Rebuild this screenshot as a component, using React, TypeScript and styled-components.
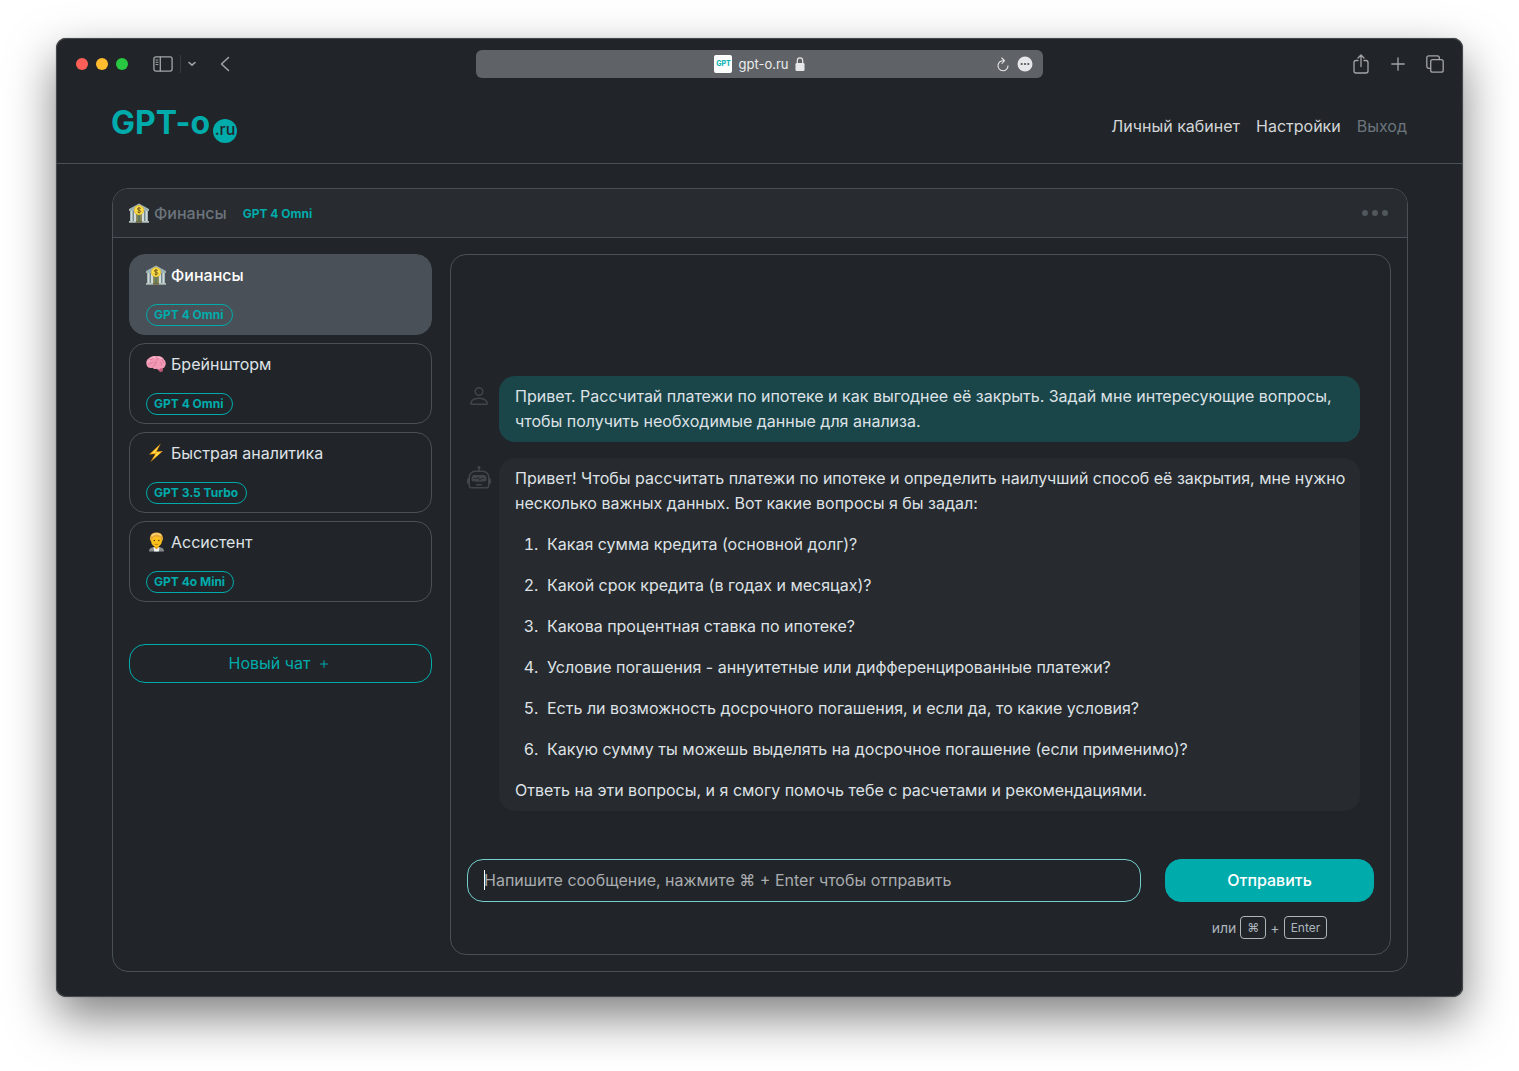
import React from "react";
import styled, { createGlobalStyle, css } from "styled-components";
import { BsPerson, BsPlus, BsRobot, BsThreeDots } from "react-icons/bs";

const teal = "#00abab";
const line = "#495057";
const surface = "#212529";

const GlobalStyle = createGlobalStyle`
  *, *::before, *::after { box-sizing: border-box; }
  body {
    margin: 0;
    background: #fff;
    color: #dee2e6;
    font: 400 16px/25px Inter, "Noto Sans", sans-serif;
  }
  button, input { font: inherit; }
  button { cursor: pointer; }
  p, h1, h2, ol, ul { margin: 0; padding: 0; }
`;

const Desktop = styled.div`
  min-height: 100vh;
  display: flex;
  flex-direction: column;
  padding: 38px 56px 74px;
`;

const BrowserWindow = styled.div`
  flex: 1;
  display: flex;
  flex-direction: column;
  background: ${surface};
  border-radius: 10px;
  box-shadow: inset 0 0 0 1px #46494d, 0 0 1px rgba(0, 0, 0, 0.6), 0 20px 48px rgba(0, 0, 0, 0.5);
`;

const Toolbar = styled.div`
  height: 52px;
  display: grid;
  grid-template-columns: 1fr minmax(0, 567px) 1fr;
  align-items: center;
  padding: 0 18px;
`;

const ToolGroup = styled.div<{ $end?: boolean }>`
  display: flex;
  align-items: center;
  gap: ${(p) => (p.$end ? "17px" : "0")};
  justify-content: ${(p) => (p.$end ? "flex-end" : "flex-start")};
`;

const Lights = styled.div`
  display: flex;
  gap: 8px;
  margin: 0 23px 0 2px;
`;

const Light = styled.span<{ $color: string }>`
  width: 12px;
  height: 12px;
  border-radius: 50%;
  background: ${(p) => p.$color};
`;

const ToolButton = styled.button<{ $width: number }>`
  width: ${(p) => p.$width}px;
  height: 24px;
  display: flex;
  align-items: center;
  justify-content: center;
  padding: 0;
  border: 0;
  background: none;
  color: #a3a5a8;
`;

const ToolDivider = styled.span`
  width: 1px;
  height: 18px;
  margin: 0 2px 0 5px;
  background: #36393d;
`;

const AddressBar = styled.div`
  height: 28px;
  display: grid;
  grid-template-columns: 1fr auto 1fr;
  align-items: center;
  border-radius: 6px;
  background: #5f6266;
  color: #eceded;
  font-size: 13px;
  line-height: 18px;
`;

const Site = styled.div`
  grid-column: 2;
  display: flex;
  align-items: center;
  gap: 6px;
`;

const Favicon = styled.span`
  width: 18px;
  height: 18px;
  border-radius: 2px;
  background: #fff;
  color: #12b5b5;
  font-size: 7px;
  line-height: 18px;
  font-weight: 800;
  text-align: center;
`;

const AddressActions = styled.div`
  display: flex;
  justify-content: flex-end;
  padding-right: 7px;

  button { color: #e6e7e8; }
`;

const SiteHeader = styled.header`
  height: 74px;
  display: flex;
  align-items: center;
  justify-content: space-between;
  padding: 0 56px 0 55px;
  border-bottom: 1px solid ${line};
`;

const Logo = styled.a`
  display: flex;
  align-items: flex-end;
  gap: 3px;
  color: ${teal};
  text-decoration: none;
  font-size: 32px;
  line-height: 40px;
  font-weight: 700;
  padding-bottom: 7px;
`;

const LogoDot = styled.span`
  width: 24px;
  height: 24px;
  border-radius: 50%;
  background: ${teal};
  color: ${surface};
  font-size: 16px;
  line-height: 20px;
  font-weight: 500;
  text-align: center;
`;

const Nav = styled.nav`
  display: flex;
  gap: 16px;
`;

const NavLink = styled.a<{ $muted?: boolean }>`
  color: ${(p) => (p.$muted ? "#6c757d" : "#d3d5d7")};
  text-decoration: none;
`;

const Main = styled.main`
  flex: 1;
  display: flex;
  padding: 24px 55px 25px 56px;
`;

const Card = styled.section`
  flex: 1;
  display: flex;
  flex-direction: column;
  border: 1px solid ${line};
  border-radius: 16px;
  overflow: hidden;
`;

const CardHeader = styled.div`
  display: flex;
  align-items: center;
  gap: 16px;
  padding: 12px 16px 11px;
  border-bottom: 1px solid ${line};
  background: #282b2f;
`;

const ChatTitle = styled.h2<{ $tone?: "muted" | "active" }>`
  display: flex;
  align-items: center;
  gap: 5px;
  font-size: 16px;
  line-height: 25px;
  font-weight: ${(p) => (p.$tone ? 500 : 400)};
  color: ${(p) => (p.$tone === "muted" ? "#6c757d" : p.$tone === "active" ? "#fff" : "#dee2e6")};

  svg { margin-bottom: 2px; }
`;

const ModelName = styled.span`
  color: ${teal};
  font-size: 12px;
  line-height: 20px;
  font-weight: 700;
`;

const MenuButton = styled.button`
  height: 24px;
  display: flex;
  align-items: center;
  margin-left: auto;
  padding: 0 0 2px;
  border: 0;
  background: none;
  color: #50575d;
  font-size: 32px;
`;

const CardBody = styled.div`
  flex: 1;
  display: grid;
  grid-template-columns: 303px minmax(0, 1fr);
  gap: 18px;
  padding: 16px;
`;

const ChatList = styled.ul`
  display: flex;
  flex-direction: column;
  gap: 8px;
  list-style: none;
  margin-bottom: 42px;
`;

const ChatItem = styled.button<{ $active?: boolean }>`
  width: 100%;
  display: flex;
  flex-direction: column;
  align-items: flex-start;
  gap: 16px;
  padding: 8px 16px;
  border: 1px solid ${line};
  border-radius: 16px;
  background: ${(p) => (p.$active ? line : "transparent")};
`;

const Badge = styled(ModelName)`
  padding: 0 8px 0 7px;
  border: 1px solid ${teal};
  border-radius: 11px;
`;

const buttonShape = css`
  display: flex;
  align-items: center;
  justify-content: center;
  width: 100%;
  border: 1px solid ${teal};
  border-radius: 16px;
`;

const NewChatButton = styled.button`
  ${buttonShape}
  gap: 6px;
  padding: 6px 16px;
  background: transparent;
  color: ${teal};
`;

const Conversation = styled.section`
  display: flex;
  flex-direction: column;
  border: 1px solid ${line};
  border-radius: 16px;
  padding: 16px 16px 15px;
`;

const Messages = styled.div`
  flex: 1;
  display: flex;
  flex-direction: column;
  justify-content: flex-end;
  gap: 16px;
  padding: 0 14px 48px 0;
`;

const Message = styled.article`
  display: flex;
  gap: 8px;
`;

const Avatar = styled.div`
  padding-top: 8px;
  color: #41464b;
  font-size: 24px;
  line-height: 0;
`;

const Bubble = styled.div<{ $own?: boolean }>`
  flex: 1;
  display: flex;
  flex-direction: column;
  gap: 16px;
  padding: 8px 12px 8px 16px;
  border-radius: 16px;
  background: ${(p) => (p.$own ? "#1a464a" : "#272a2e")};
`;

const Questions = styled.ol`
  display: flex;
  flex-direction: column;
  gap: 16px;
  padding-left: 32px;

  li::marker { content: counter(list-item) ".\\00a0\\00a0"; }
`;

const Composer = styled.form`
  display: grid;
  grid-template-columns: minmax(0, 1fr) 209px;
  column-gap: 24px;
  row-gap: 14px;
`;

const Field = styled.div`
  position: relative;
`;

const Caret = styled.span`
  position: absolute;
  left: 17px;
  top: 11px;
  width: 1px;
  height: 20px;
  background: #fff;
`;

const MessageInput = styled.input`
  width: 100%;
  height: 43px;
  padding: 0 16px 2px;
  border: 1px solid #75cfcd;
  border-radius: 16px;
  outline: 0;
  background: transparent;
  color: #dee2e6;

  &::placeholder { color: #a9acaf; opacity: 1; }
`;

const SendButton = styled.button`
  ${buttonShape}
  height: 43px;
  background: ${teal};
  color: #fff;
  font-weight: 500;
`;

const Hint = styled.div`
  grid-column: 2;
  display: flex;
  align-items: center;
  justify-content: center;
  gap: 4px;
  color: #adb5bd;
  font-size: 14px;
  line-height: 21px;
`;

const Key = styled.kbd`
  padding: 0 6px;
  border: 1px solid #adb5bd;
  border-radius: 4px;
  font: 400 12px/21px Inter, "Noto Sans", sans-serif;
`;

const BankEmoji = () => (
  <svg width="20" height="20" viewBox="0 0 20 20" aria-hidden="true">
    <path d="M0 6 10 .5 20 6v2H0z" fill="#9db3b5" />
    <path d="M1 8h18v10H1z" fill="#74898c" />
    <path d="M1.500 8h2v10h-2zM5 8h2v10H5zM13 8h2v10h-2zM16.500 8h2v10h-2z" fill="#d3dcdc" />
    <path d="M7.500 11h5v8h-5z" fill="#35656e" />
    <path d="M7.500 12h1v7h-1zM11.500 12h1v7h-1zM9.700 12h.6v7h-.6z" fill="#c9a43a" />
    <path d="M0 18h20v1.700H0z" fill="#b6c3bf" />
    <path d="M7 18h6v1.700H7z" fill="#6f6a43" />
    <circle cx="10" cy="7.200" r="5" fill="#e9bd22" />
    <circle cx="10" cy="7.200" r="4.200" fill="#fbdc49" />
    <path d="M11.800 5.700c-.3-1-3.400-1.200-3.400.3 0 1.600 3.400.8 3.400 2.400 0 1.500-3.300 1.400-3.600.2M10 4v6.500" fill="none" stroke="#6b5317" strokeWidth=".9" />
  </svg>
);

const BrainEmoji = () => (
  <svg width="20" height="20" viewBox="0 0 20 20" aria-hidden="true">
    <path d="M12 13.500c2-.5 5 0 5 1.700S16.300 18 14.800 18s-2.500-1.500-2.800-3z" fill="#c4577b" />
    <path d="M.8 11.500C-.5 8.500.8 5 3.500 3.800 5.500 1.900 9 1.600 11 2.200c3-.5 6 .9 7 3.300 1.800 1.500 2.400 4.500 1 6.800-.7 1.900-2.600 2.400-4.300 2-1 1.600-3.200 1.600-4.200.4-1.500.6-3.200.2-3.800-1-2.200.7-5.200.1-5.900-2.200z" fill="#f29ab5" />
    <path d="M3 6.500c1.300-1 2.500-.5 3.500-1.500M2.500 10.500c1-1.500 2.800-.5 3.800-2M7 12c1-1.200 2.500-.8 3-2.200M10 6.500c.8-1 2-.8 2.500-2M14.500 8.500c1.200.3 1.200 1.700.8 2.800M16 5.500c-.3 1.200 1.200 1.600 1.400 3M8 8.500c.8.400 1.700.2 2.500-.3" fill="none" stroke="#d36a90" strokeWidth=".7" strokeLinecap="round" />
    <path d="M4.800 4c1-.8 2.700-1 4-.8M12.500 3.400c1.500 0 2.500.6 3 1.300M1.800 8c.3-.8 1-1.300 2-1.500" fill="none" stroke="#fccbd9" strokeWidth=".9" strokeLinecap="round" />
  </svg>
);

const BoltEmoji = () => (
  <svg width="20" height="20" viewBox="0 0 20 20" aria-hidden="true">
    <path d="M14.800.5 3 11.500l6.200-.4L4.300 19.300 17 8l-6.300.4z" fill="#f39c12" />
    <path d="M13.200 2.800 5.200 10.400l5.600-.6-3.900 6.400L15 8.900l-6 .5z" fill="#ffe04d" />
  </svg>
);

const WorkerEmoji = () => (
  <svg width="20" height="20" viewBox="0 0 20 20" aria-hidden="true">
    <path d="M3 19.500c0-3.500 2.500-4.500 7.500-4.500s7.500 1 7.500 4.500z" fill="#858a8d" />
    <path d="M7.500 15.200h6l-.8 4.300H8.300z" fill="#f1f3f4" />
    <path d="M8.500 12.500h4v3.300l-2 1.400-2-1.400z" fill="#e89b13" />
    <ellipse cx="10.500" cy="8.500" rx="5.500" ry="6.500" fill="#fcc21b" />
    <path d="M4.100 9C3.200 3 6 .5 10.500.5S17.800 3 16.900 9c-1-.8-1.500-2.300-2-3.700-2.400 0-4.400-.2-5.900-.8-1.500.6-2.700 2.500-4.900 4.500z" fill="#e5a93a" />
    <path d="M6 3.700C8 1.500 12 1.200 14.700 3.200" fill="none" stroke="#ffdb80" strokeWidth="1.400" strokeLinecap="round" />
    <circle cx="8.300" cy="8.500" r=".8" fill="#513a16" />
    <circle cx="12.800" cy="8.500" r=".8" fill="#513a16" />
    <path d="M8.800 12c1 .7 2.400.7 3.400 0" fill="none" stroke="#9c5b18" strokeWidth=".8" />
  </svg>
);

const chats = [
  { title: "Финансы", model: "GPT 4 Omni", Emoji: BankEmoji, active: true },
  { title: "Брейншторм", model: "GPT 4 Omni", Emoji: BrainEmoji },
  { title: "Быстрая аналитика", model: "GPT 3.5 Turbo", Emoji: BoltEmoji },
  { title: "Ассистент", model: "GPT 4o Mini", Emoji: WorkerEmoji },
];

const questions = [
  "Какая сумма кредита (основной долг)?",
  "Какой срок кредита (в годах и месяцах)?",
  "Какова процентная ставка по ипотеке?",
  "Условие погашения - аннуитетные или дифференцированные платежи?",
  "Есть ли возможность досрочного погашения, и если да, то какие условия?",
  "Какую сумму ты можешь выделять на досрочное погашение (если применимо)?",
];

const stroke = { fill: "none", stroke: "currentColor", strokeLinecap: "round", strokeLinejoin: "round" } as const;

function BrowserToolbar() {
  return (
    <Toolbar>
      <ToolGroup>
        <Lights>
          <Light $color="#ff5f57" />
          <Light $color="#febc2e" />
          <Light $color="#28c840" />
        </Lights>
        <ToolButton $width={24} aria-label="Sidebar">
          <svg width="20" height="16" viewBox="0 0 20 16" {...stroke} strokeWidth="1.300">
            <rect x=".9" y=".9" width="18.200" height="14.200" rx="2" />
            <path d="M7.300 1v14" />
            <path d="M3 4h2M3 6.300h2M3 8.600h2" strokeWidth="1" />
          </svg>
        </ToolButton>
        <ToolDivider />
        <ToolButton $width={18} aria-label="Tab groups">
          <svg width="8" height="6" viewBox="0 0 8 6" {...stroke} strokeWidth="1.600">
            <path d="m1 1.500 3 2.700 3-2.700" />
          </svg>
        </ToolButton>
        <ToolButton $width={48} aria-label="Back">
          <svg width="10" height="16" viewBox="0 0 10 16" {...stroke} strokeWidth="1.500">
            <path d="M8.500 1.500 1.500 8l7 6.500" />
          </svg>
        </ToolButton>
      </ToolGroup>
      <AddressBar>
        <Site>
          <Favicon>GPT</Favicon>
          <span>gpt-o.ru</span>
          <svg width="10" height="14" viewBox="0 0 10 14" aria-hidden="true">
            <rect x=".5" y="6" width="9" height="8" rx="1.300" fill="#e6e7e8" />
            <path d="M2.300 6V3.800a2.700 2.900 0 0 1 5.400 0V6" fill="none" stroke="#e6e7e8" strokeWidth="1.200" />
          </svg>
        </Site>
        <AddressActions>
          <ToolButton $width={22} aria-label="Reload">
            <svg width="12" height="15" viewBox="0 0 12 15" {...stroke} strokeWidth="1.100">
              <path d="M6.800 3.800A5 5 0 1 0 11 8.700M4.800 1l2.700 2.700-2.500 2.800" />
            </svg>
          </ToolButton>
          <ToolButton $width={22} aria-label="Page menu">
            <svg width="16" height="16" viewBox="0 0 16 16">
              <circle cx="8" cy="8" r="7.500" fill="currentColor" />
              <g fill="#4d5054">
                <circle cx="4.700" cy="8" r="1.100" />
                <circle cx="8" cy="8" r="1.100" />
                <circle cx="11.300" cy="8" r="1.100" />
              </g>
            </svg>
          </ToolButton>
        </AddressActions>
      </AddressBar>
      <ToolGroup $end>
        <ToolButton $width={20} aria-label="Share">
          <svg width="16" height="20" viewBox="0 0 16 20" {...stroke} strokeWidth="1.300">
            <path d="M5 6.500H3A2 2 0 0 0 1 8.500V17a2 2 0 0 0 2 2h10a2 2 0 0 0 2-2V8.500a2 2 0 0 0-2-2h-2M8 12.500V1.200M5 4l3-3 3 3" />
          </svg>
        </ToolButton>
        <ToolButton $width={20} aria-label="New tab">
          <svg width="14" height="14" viewBox="0 0 14 14" {...stroke} strokeWidth="1.300">
            <path d="M7 .8v12.400M.8 7h12.400" />
          </svg>
        </ToolButton>
        <ToolButton $width={20} aria-label="Tab overview">
          <svg width="18" height="18" viewBox="0 0 18 18" {...stroke} strokeWidth="1.300">
            <rect x="4.700" y="4.700" width="12.500" height="12.500" rx="2" />
            <path d="M4.500 13.300H2.800a2 2 0 0 1-2-2V2.800a2 2 0 0 1 2-2h8.500a2 2 0 0 1 2 2v1.700" />
          </svg>
        </ToolButton>
      </ToolGroup>
    </Toolbar>
  );
}

export default function App() {
  return (
    <>
      <GlobalStyle />
      <Desktop>
        <BrowserWindow>
          <BrowserToolbar />
          <SiteHeader>
            <Logo href="#">
              GPT-o<LogoDot>.ru</LogoDot>
            </Logo>
            <Nav>
              <NavLink href="#account">Личный кабинет</NavLink>
              <NavLink href="#settings">Настройки</NavLink>
              <NavLink href="#logout" $muted>Выход</NavLink>
            </Nav>
          </SiteHeader>
          <Main>
            <Card>
              <CardHeader>
                <ChatTitle $tone="muted"><BankEmoji />Финансы</ChatTitle>
                <ModelName>GPT 4 Omni</ModelName>
                <MenuButton aria-label="Меню"><BsThreeDots /></MenuButton>
              </CardHeader>
              <CardBody>
                <aside>
                  <ChatList>
                    {chats.map(({ title, model, Emoji, active }) => (
                      <li key={title}>
                        <ChatItem $active={active}>
                          <ChatTitle as="span" $tone={active ? "active" : undefined}><Emoji />{title}</ChatTitle>
                          <Badge>{model}</Badge>
                        </ChatItem>
                      </li>
                    ))}
                  </ChatList>
                  <NewChatButton>Новый чат<BsPlus /></NewChatButton>
                </aside>
                <Conversation>
                  <Messages>
                    <Message>
                      <Avatar><BsPerson /></Avatar>
                      <Bubble $own>
                        <p>Привет. Рассчитай платежи по ипотеке и как выгоднее её закрыть. Задай мне интересующие вопросы, чтобы получить необходимые данные для анализа.</p>
                      </Bubble>
                    </Message>
                    <Message>
                      <Avatar><BsRobot /></Avatar>
                      <Bubble>
                        <p>Привет! Чтобы рассчитать платежи по ипотеке и определить наилучший способ её закрытия, мне нужно несколько важных данных. Вот какие вопросы я бы задал:</p>
                        <Questions>
                          {questions.map((q) => <li key={q}>{q}</li>)}
                        </Questions>
                        <p>Ответь на эти вопросы, и я смогу помочь тебе с расчетами и рекомендациями.</p>
                      </Bubble>
                    </Message>
                  </Messages>
                  <Composer onSubmit={(e) => e.preventDefault()}>
                    <Field>
                      <MessageInput aria-label="Сообщение" placeholder="Напишите сообщение, нажмите ⌘ + Enter чтобы отправить" />
                      <Caret />
                    </Field>
                    <SendButton type="submit">Отправить</SendButton>
                    <Hint>или <Key>⌘</Key> + <Key>Enter</Key></Hint>
                  </Composer>
                </Conversation>
              </CardBody>
            </Card>
          </Main>
        </BrowserWindow>
      </Desktop>
    </>
  );
}
